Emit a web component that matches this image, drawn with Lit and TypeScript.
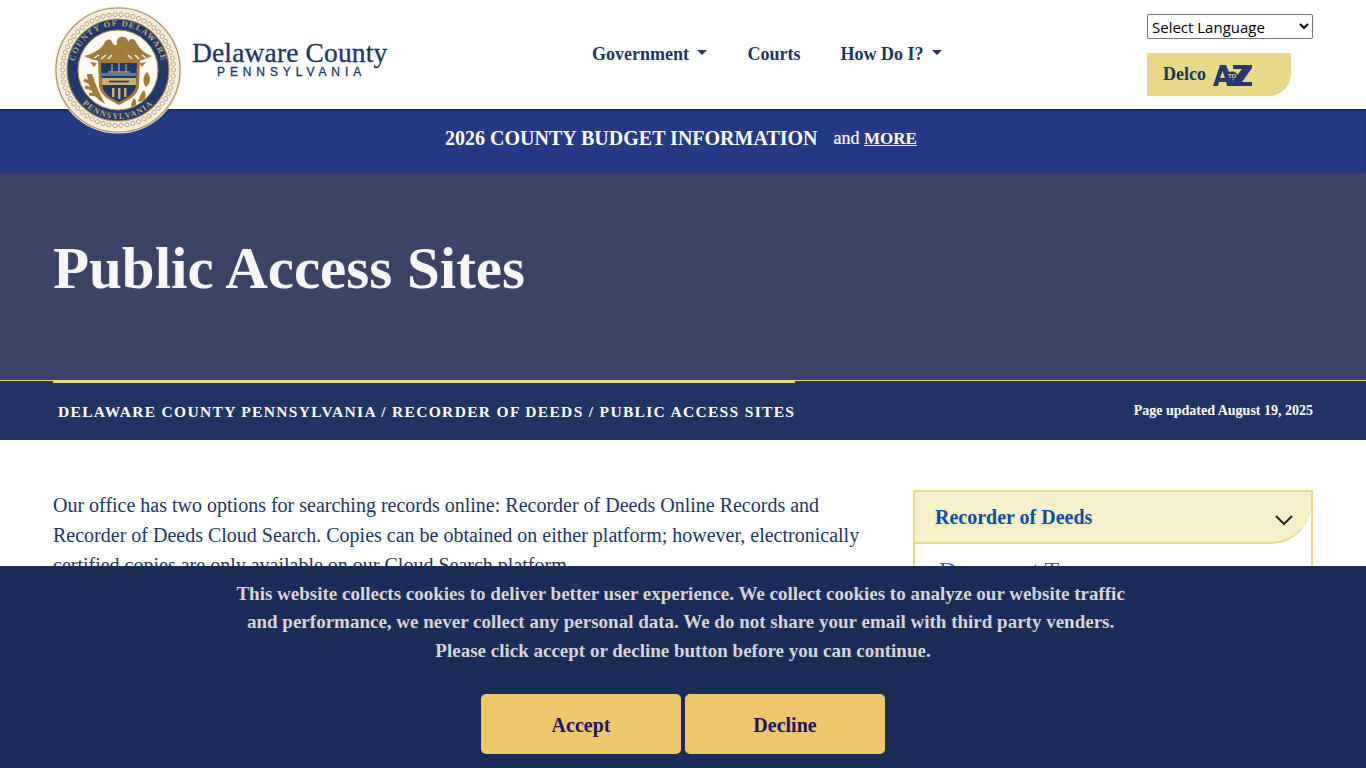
import { LitElement, html, css, svg } from 'lit';
import { customElement } from 'lit/decorators.js';

@customElement('county-seal')
export class CountySeal extends LitElement {
  static styles = css`
    :host { display: block; width: 128px; height: 128px; }
    svg { display: block; }
    .ring-text {
      font-family: 'Liberation Serif', serif;
      font-size: 8.5px;
      font-weight: 700;
      letter-spacing: 1.15px;
      fill: #b9a780;
    }
  `;

  render() {
    const dots = Array.from({ length: 58 }, (_, i) => {
      const a = (i / 58) * Math.PI * 2;
      return svg`<circle cx=${64 + 55.5 * Math.cos(a)} cy=${64 + 55.5 * Math.sin(a)} r="2.1" fill="#f8f1e2" stroke="#b3955f" stroke-width=".8"></circle>`;
    });
    return html`
      <svg width="128" height="128" viewBox="0 0 128 128">
        <circle cx="64" cy="64" r="63.5" fill="#efe7d8"></circle>
        <circle cx="64" cy="64" r="62" fill="#f6efe0" stroke="#ad8f58" stroke-width="1.2"></circle>
        ${dots}
        <circle cx="64" cy="64" r="51" fill="#24386a" stroke="#ad8f58" stroke-width="1.2"></circle>
        <defs>
          <path id="top" d="M 20.5 72 A 44.2 44.2 0 1 1 107.5 72"></path>
          <path id="bot" d="M 15 64 A 49 49 0 0 0 113 64"></path>
        </defs>
        <text class="ring-text"><textPath href="#top" startOffset="50%" text-anchor="middle">COUNTY OF DELAWARE</textPath></text>
        <text class="ring-text"><textPath href="#bot" startOffset="50%" text-anchor="middle">PENNSYLVANIA</textPath></text>
        <circle cx="64" cy="64" r="40" fill="#fbf8f0" stroke="#ad8f58"></circle>
        <!-- eagle -->
        <path d="M30 50 C38 48 46 44 50 38 C52 33 56 32 58 36 C60 40 62 40 63 38 C62 33 66 30 69 31 C72 31 74 33 74 36 C76 32 80 32 82 36 C86 44 92 48 98 50 C92 53 86 55 80 55 L48 55 C42 55 36 53 30 50 Z" fill="#a27c3a"></path>
        <path d="M40 52 l5 -3 M47 53 l5 -4 M54 53 l4 -4 M74 49 l4 4 M81 49 l4 4 M88 49 l4 3" stroke="#fbf8f0" stroke-width="1.4" fill="none"></path>
        <path d="M36 56 l7 1 l-3 4 Z M92 56 l-7 1 l3 4 Z" fill="#a27c3a"></path>
        <!-- shield -->
        <path d="M44 54 L86 54 L85 80 C84 90 74 94 65 99 C56 94 46 90 45 80 Z" fill="#a27c3a"></path>
        <path d="M47 57 L83 57 L82 79 C81 88 73 92 65 96 C57 92 49 88 48 79 Z" fill="#22386a"></path>
        <path d="M47.500 67 L82.500 67 L82.500 70 L47.500 70 Z" fill="#5f769e"></path>
        <path d="M58 66 V58 M65 66 V57 M72 66 V58 M54 66 H76" stroke="#a89a76" stroke-width="1.4"></path>
        <path d="M48 72 L82 72 L82 79 L48 79 Z" fill="#c8ad6e"></path>
        <path d="M55 75.500 H75" stroke="#22386a" stroke-width="1.6"></path>
        <path d="M58 82 h2.500 v9 h-2.500 Z M64 82 h2.500 v11 h-2.500 Z M70 82 h2.500 v9 h-2.500 Z" fill="#c8ad6e"></path>
        <!-- branches -->
        <path d="M33 68 C34 82 40 92 51 98 C47 90 42 80 38 68 Z" fill="#a27c3a"></path>
        <path d="M30 74 l7 3 M31 81 l7 2 M35 88 l7 1" stroke="#a27c3a" stroke-width="3"></path>
        <path d="M93 66 C98 72 96 78 92 81 C88 76 89 70 93 66 Z M90 84 C86 88 85 93 84 96 C90 96 94 91 90 84 Z M80 92 C78 95 77 98 77 101 C81 101 85 97 80 92 Z" fill="#a27c3a"></path>
      </svg>
    `;
  }
}

@customElement('app-root')
export class AppRoot extends LitElement {
  static styles = css`
    :host {
      display: block;
      height: 100vh;
      overflow: hidden;
      font-family: 'Liberation Serif', 'Times New Roman', serif;
      color: #203563;
      background: #fff;
    }

    .header {
      position: relative;
      height: 109px;
      padding: 0 53px;
      box-sizing: border-box;
      display: flex;
      background: #fff;
    }
    county-seal {
      position: absolute;
      left: 54px;
      top: 6px;
      z-index: 2;
    }
    .brand {
      margin-left: 139px;
      padding-top: 39px;
      width: 200px;
      color: #203563;
    }
    .brand-name {
      font-size: 27.5px;
      line-height: 27px;
      letter-spacing: 0.15px;
      white-space: nowrap;
      -webkit-text-stroke: 0.3px #203563;
    }
    .brand-state {
      font-family: 'Liberation Sans', sans-serif;
      font-size: 12px;
      line-height: 12px;
      letter-spacing: 4.9px;
      margin-left: 25px;
      white-space: nowrap;
      -webkit-text-stroke: 0.3px #203563;
    }

    .nav {
      display: flex;
      gap: 40px;
      margin-left: 200px;
      padding-top: 44px;
      font-size: 18px;
      font-weight: 700;
      line-height: 21px;
      white-space: nowrap;
    }
    .caret {
      display: inline-block;
      width: 0;
      height: 0;
      margin-left: 4px;
      vertical-align: 5px;
      border-top: 5px solid #203563;
      border-left: 5px solid transparent;
      border-right: 5px solid transparent;
    }

    .tools {
      margin-left: auto;
      width: 166px;
      padding-top: 14px;
    }
    select {
      display: block;
      width: 166px;
      height: 25px;
      box-sizing: border-box;
      font-family: 'Open Sans', 'Noto Sans', sans-serif;
      font-size: 15px;
      color: #000;
      background: #fff;
      border: 1px solid #767676;
      border-radius: 2px;
    }
    .atoz {
      margin-top: 14px;
      width: 144px;
      height: 43px;
      box-sizing: border-box;
      padding-left: 16px;
      background: #e8d888;
      border-bottom-right-radius: 22px;
      display: flex;
      align-items: center;
      gap: 5px;
      font-size: 18px;
      font-weight: 700;
    }
    .atoz-to {
      font-family: 'Liberation Sans', sans-serif;
      font-size: 6px;
      font-weight: 700;
      fill: #e8d888;
    }

    .banner {
      height: 64px;
      box-sizing: border-box;
      padding: 0 4px 6px 0;
      background: #243a85;
      box-shadow: inset 0 3px 3px -1px #1c2d63;
      color: #fff;
      display: flex;
      align-items: center;
      justify-content: center;
      font-weight: 700;
      white-space: nowrap;
    }
    .banner-title { font-size: 20px; }
    .banner-more {
      font-size: 18px;
      font-weight: 400;
      margin-left: 16px;
      margin-top: 1px;
      -webkit-text-stroke: 0.2px #fff;
    }
    .banner-more a {
      color: inherit;
      font-size: 17px;
      font-weight: 700;
      text-decoration: underline;
      -webkit-text-stroke: 0;
    }

    .hero {
      height: 207px;
      background: #3b4366;
      box-sizing: border-box;
      padding: 63px 53px 0;
      color: #f6f6f6;
    }
    .hero h1 {
      margin: 0;
      font-size: 59px;
      line-height: 64px;
      font-weight: 700;
    }

    .crumbs {
      height: 60px;
      background: #203563;
      border-top: 1px solid #e8d888;
      box-sizing: border-box;
      padding: 0 53px;
      display: flex;
      justify-content: space-between;
      color: #fff;
      font-weight: 700;
      white-space: nowrap;
    }
    .trail {
      border-top: 3px solid #e8d888;
      margin-top: -1px;
      width: 742px;
      box-sizing: border-box;
      padding: 19px 0 0 5px;
      font-size: 15.5px;
      line-height: 20px;
      letter-spacing: 1.32px;
    }
    .updated {
      padding-top: 20px;
      font-size: 14px;
      line-height: 20px;
    }

    .main {
      display: flex;
      justify-content: space-between;
      padding: 50px 53px 0;
    }
    .intro {
      width: 820px;
      margin: 0;
      font-size: 20px;
      line-height: 30px;
      padding-top: 0;
    }
    .side {
      width: 400px;
      box-sizing: border-box;
      border: 2px solid #e8d888;
      border-bottom: none;
      height: 300px;
    }
    .side-head {
      height: 52px;
      box-sizing: border-box;
      padding: 1px 18px 0 20px;
      background: #f5efca;
      border-bottom: 2px solid #e8d888;
      border-bottom-right-radius: 40px;
      display: flex;
      align-items: center;
      justify-content: space-between;
      color: #0a50a5;
      font-size: 20px;
      font-weight: 700;
    }
    .side-head svg { margin-top: 5px; }
    .side-item {
      padding: 13px 24px;
      font-size: 24px;
      color: #3a68b8;
    }

    .cookie {
      position: fixed;
      left: 0;
      right: 0;
      bottom: 0;
      height: 202px;
      background: #1a2d56;
      color: #d5d5d8;
      text-align: center;
      box-sizing: border-box;
      padding-top: 13.75px;
      z-index: 5;
    }
    .cookie p {
      margin: 0;
      font-size: 19px;
      line-height: 28.5px;
      font-weight: 700;
    }
    .actions {
      display: flex;
      justify-content: center;
      gap: 4px;
      margin-top: 28.25px;
    }
    .actions button {
      width: 200px;
      height: 60px;
      padding: 3px 0 0;
      border: none;
      border-radius: 5px;
      background: #ecc76c;
      color: #1c1560;
      font-family: inherit;
      font-size: 20px;
      font-weight: 700;
    }
  `;

  render() {
    return html`
      <header class="header">
        <county-seal></county-seal>
        <div class="brand">
          <div class="brand-name">Delaware County</div>
          <div class="brand-state">PENNSYLVANIA</div>
        </div>
        <nav class="nav">
          <span>Government <i class="caret"></i></span>
          <span>Courts</span>
          <span>How Do I? <i class="caret"></i></span>
        </nav>
        <div class="tools">
          <select><option>Select Language</option></select>
          <div class="atoz">
            <span>Delco</span>
            <svg width="42" height="24" viewBox="0 0 42 24">
              <path fill-rule="evenodd" d="M0 23 L2 23 L9 2 L15 2 L24 23 L16 23 L15 19 L8 19 L7 23 Z M9 15 L14 15 L11.500 8 Z" fill="#27386e"></path>
              <path d="M22 2 L41 2 L41 5 L31 19 L41 19 L41 23 L20 23 L20 20 L31 6 L22 6 Z" fill="#27386e"></path>
              <ellipse cx="21" cy="12.500" rx="5.500" ry="4" fill="#27386e"></ellipse>
              <text class="atoz-to" x="21" y="14.700" text-anchor="middle">TO</text>
            </svg>
          </div>
        </div>
      </header>
      <div class="banner">
        <span class="banner-title">2026 COUNTY BUDGET INFORMATION</span>
        <span class="banner-more">and <a href="#">MORE</a></span>
      </div>
      <section class="hero"><h1>Public Access Sites</h1></section>
      <div class="crumbs">
        <div class="trail">DELAWARE COUNTY PENNSYLVANIA / RECORDER OF DEEDS / PUBLIC ACCESS SITES</div>
        <div class="updated">Page updated August 19, 2025</div>
      </div>
      <main class="main">
        <p class="intro">
          Our office has two options for searching records online: Recorder of Deeds Online Records and
          Recorder of Deeds Cloud Search. Copies can be obtained on either platform; however, electronically
          certified copies are only available on our Cloud Search platform.
        </p>
        <aside class="side">
          <div class="side-head">
            <span>Recorder of Deeds</span>
            <svg width="18" height="12" viewBox="0 0 18 12" fill="none" stroke="#222" stroke-width="2"><path d="M1 2 L9 10 L17 2"></path></svg>
          </div>
          <div class="side-item">Document Types</div>
        </aside>
      </main>
      <div class="cookie">
        <p>This website collects cookies to deliver better user experience. We collect cookies to analyze our website traffic&nbsp;<br />
        and performance, we never collect any personal data. We do not share your email with third party venders.&nbsp;<br />
        Please click accept or decline button before you can continue.</p>
        <div class="actions">
          <button>Accept</button>
          <button>Decline</button>
        </div>
      </div>
    `;
  }
}
